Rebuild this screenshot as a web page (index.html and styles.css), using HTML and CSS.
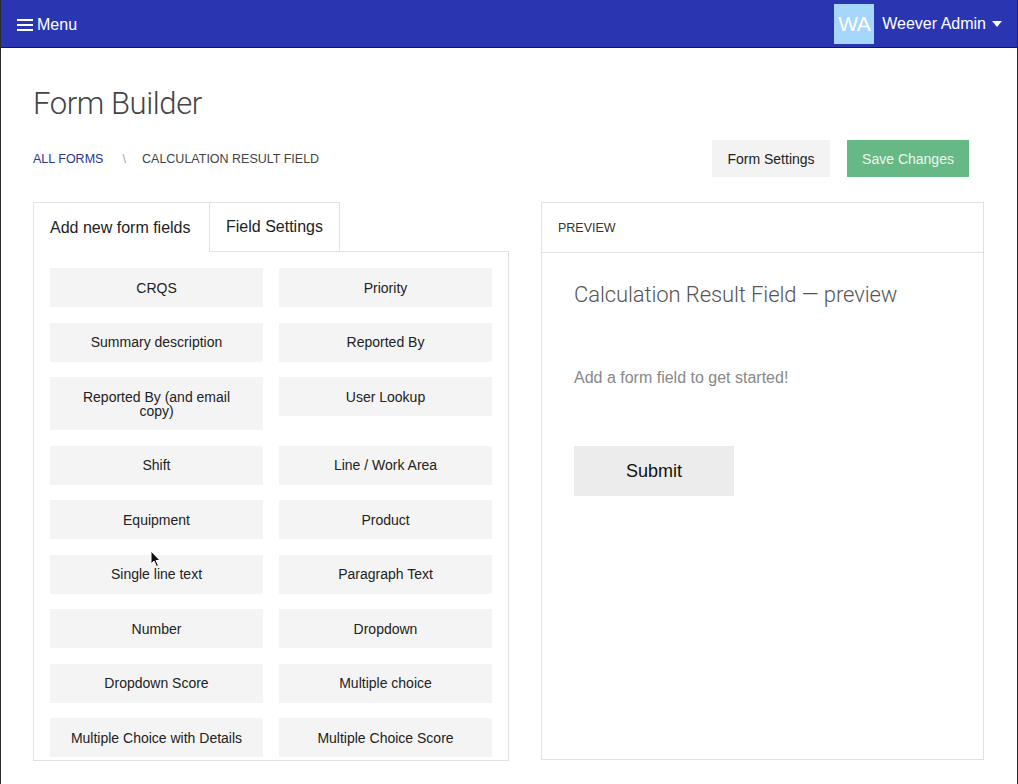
FILE: index.html
```html
<!DOCTYPE html>
<html>
<head>
<meta charset="utf-8">
<link rel="stylesheet" href="styles.css">
</head>
<body>
<div class="frame">
  <header class="topbar">
    <div class="menu">
      <svg class="burger" width="16" height="12" viewBox="0 0 16 12"><rect x="0" y="0" width="16" height="2" fill="#fff"/><rect x="0" y="5" width="16" height="2" fill="#fff"/><rect x="0" y="10" width="16" height="2" fill="#fff"/></svg>
      <span>Menu</span>
    </div>
    <div class="user">
      <div class="avatar">WA</div>
      <span class="uname">Weever Admin</span>
      <svg class="caret" width="10" height="6" viewBox="0 0 10 6"><path d="M0 0 L10 0 L5 6 Z" fill="#fff"/></svg>
    </div>
  </header>

  <main class="page">
    <h1 class="title">Form Builder</h1>
    <div class="toolbar">
      <nav class="crumbs">
        <a class="crumb-link">ALL FORMS</a>
        <span class="sep">\</span>
        <span class="crumb-cur">CALCULATION RESULT FIELD</span>
      </nav>
      <div class="actions">
        <button class="btn btn-light">Form Settings</button>
        <button class="btn btn-green">Save Changes</button>
      </div>
    </div>

    <div class="columns">
      <section class="left">
        <div class="tabs">
          <div class="tab active">Add new form fields</div>
          <div class="tab inactive">Field Settings</div>
          <div class="tab-fill"></div>
        </div>
        <div class="fields">
          <div class="field">CRQS</div>
          <div class="field">Priority</div>
          <div class="field">Summary description</div>
          <div class="field">Reported By</div>
          <div class="field">Reported By (and email copy)</div>
          <div class="field">User Lookup</div>
          <div class="field">Shift</div>
          <div class="field">Line / Work Area</div>
          <div class="field">Equipment</div>
          <div class="field">Product</div>
          <div class="field">Single line text</div>
          <div class="field">Paragraph Text</div>
          <div class="field">Number</div>
          <div class="field">Dropdown</div>
          <div class="field">Dropdown Score</div>
          <div class="field">Multiple choice</div>
          <div class="field">Multiple Choice with Details</div>
          <div class="field">Multiple Choice Score</div>
        </div>
      </section>

      <section class="preview">
        <div class="preview-head">PREVIEW</div>
        <div class="preview-body">
          <h2 class="preview-title">Calculation Result Field — preview</h2>
          <p class="empty">Add a form field to get started!</p>
          <button class="submit">Submit</button>
        </div>
      </section>
    </div>
  </main>

  <svg class="cursor" width="12" height="18" viewBox="0 0 12 18"><path d="M1 1 L1 14 L4 11 L6.5 16.5 L8.5 15.5 L6 10.5 L10 10.5 Z" fill="#111" stroke="#fff" stroke-width="1"/></svg>
</div>
</body>
</html>
```

FILE: styles.css
```css
* { box-sizing: border-box; }
html, body { margin: 0; padding: 0; }
body {
  font-family: "Liberation Sans", Arial, sans-serif;
  color: #222;
  background: #fff;
}
.frame {
  position: relative;
  width: 1018px;
  height: 784px;
  overflow: hidden;
  border-left: 1px solid #2a2a2a;
  border-right: 1px solid #2a2a2a;
}
.topbar {
  height: 48px;
  background: #2a36b1;
  border-bottom: 1px solid #1a1a3a;
  display: flex;
  align-items: center;
  justify-content: space-between;
  padding: 1px 16px 0 16px;
  color: #fff;
}
.menu {
  display: flex;
  align-items: center;
  font-size: 16px;
  gap: 4px;
  margin-top: 2px;
}
.burger { display: block; }
.user {
  display: flex;
  align-items: center;
  height: 46px;
  margin-right: -1px;
}
.avatar {
  width: 40px;
  height: 40px;
  background: #a6d6fb;
  color: #fff;
  font-size: 21px;
  display: flex;
  align-items: center;
  justify-content: center;
  letter-spacing: -0.5px;
}
.uname {
  font-size: 16px;
  margin-left: 8px;
}
.caret { margin-left: 6px; }

.page {
  padding: 0 33px 0 32px;
}
.title {
  margin: 0;
  padding-top: 38px;
  font-size: 31px;
  font-weight: 300;
  font-family: "Roboto", "Liberation Sans", sans-serif;
  color: #444;
  line-height: 36px;
  letter-spacing: -0.4px;
}
.toolbar {
  display: flex;
  justify-content: space-between;
  align-items: center;
  margin-top: 18px;
  padding-right: 15px;
}
.crumbs {
  font-size: 12.5px;
  display: flex;
  align-items: center;
}
.crumb-link { color: #2a3590; }
.sep { color: #aaa; margin: 0 16px 0 19px; font-size: 13px; }
.crumb-cur { color: #444; }
.actions { display: flex; gap: 17px; }
.btn {
  font-family: "Liberation Sans", Arial, sans-serif;
  font-size: 14px;
  height: 37px;
  border: none;
  padding: 0;
  cursor: pointer;
}
.btn-light { background: #f3f3f3; color: #222; width: 118px; }
.btn-green { background: #66b885; color: #eef6ef; width: 122px; }

.columns {
  display: flex;
  gap: 32px;
  margin-top: 25px;
}
.left {
  width: 476px;
  display: flex;
  flex-direction: column;
}
.tabs {
  display: flex;
  height: 50px;
}
.tab {
  font-size: 16px;
  display: flex;
  align-items: center;
  padding: 0 16px;
  border: 1px solid #e2e2e2;
  color: #222;
}
.tab.active {
  width: 176px;
  border-bottom: none;
  border-right: none;
}
.tab.inactive {
  width: 131px;
  border-bottom: 1px solid #e2e2e2;
  justify-content: center;
}
.tab-fill {
  flex: 1;
  border-bottom: 1px solid #e2e2e2;
}
.fields {
  border: 1px solid #e2e2e2;
  border-top: none;
  height: 509px;
  overflow: hidden;
  padding: 16px 16px 0 16px;
  display: grid;
  grid-template-columns: 213px 213px;
  column-gap: 16px;
  row-gap: 15.5px;
  align-content: start;
}
.field {
  background: #f4f4f4;
  font-size: 14px;
  line-height: 14px;
  text-align: center;
  padding: 12.5px 16px 12.5px;
  color: #222;
  align-self: start;
}
.preview {
  width: 444px;
  height: 558px;
  border: 1px solid #e2e2e2;
}
.preview-head {
  height: 50px;
  border-bottom: 1px solid #e2e2e2;
  font-size: 12.5px;
  color: #333;
  padding-left: 16px;
  display: flex;
  align-items: center;
}
.preview-body {
  padding: 28px 32px;
}
.preview-title {
  margin: 0;
  font-family: "Roboto", "Liberation Sans", sans-serif;
  font-weight: 300;
  font-size: 22px;
  color: #555;
  line-height: 28px;
  letter-spacing: -0.1px;
}
.empty {
  margin: 59px 0 0 0;
  font-size: 16px;
  color: #888;
  line-height: 20px;
}
.submit {
  margin-top: 58px;
  width: 160px;
  height: 50px;
  border: none;
  background: #ececec;
  font-family: "Liberation Sans", Arial, sans-serif;
  font-size: 18px;
  color: #111;
}
.cursor {
  position: absolute;
  left: 149px;
  top: 550px;
}
```
